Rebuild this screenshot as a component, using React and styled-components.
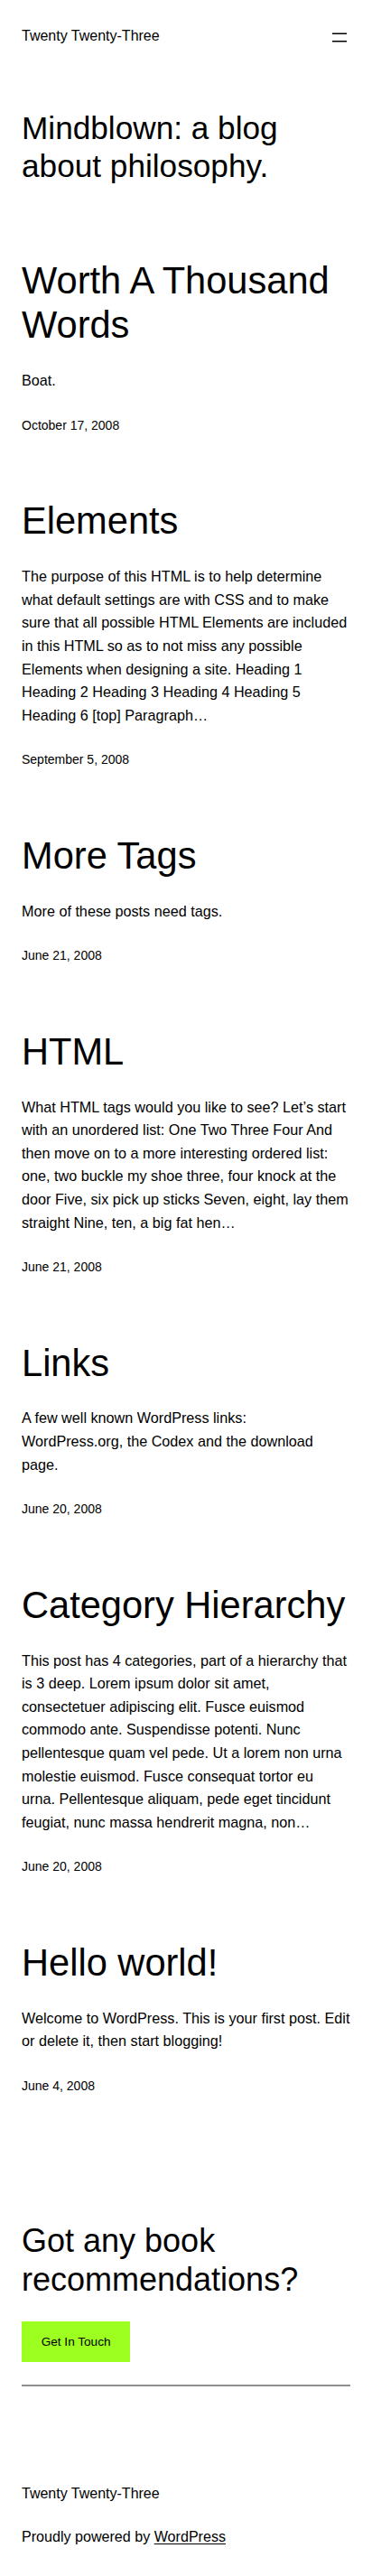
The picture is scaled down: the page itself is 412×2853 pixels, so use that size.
import React from "react";
import styled, { createGlobalStyle } from "styled-components";

const GlobalStyle = createGlobalStyle`
  *, *::before, *::after { box-sizing: border-box; }
  html, body { margin: 0; padding: 0; background: #ffffff; }
  body {
    font-family: "Liberation Sans", Arial, Helvetica, sans-serif;
    color: #000000;
  }
`;

const Page = styled.div`
  padding: 0 24px 30px;
  background: #ffffff;
`;

const Header = styled.header`
  display: flex;
  align-items: center;
  justify-content: space-between;
  padding-top: 27px;
`;

const SiteTitle = styled.a`
  font-size: 16px;
  line-height: 1.6;
  color: #000;
  text-decoration: none;
`;

const MenuButton = styled.button`
  display: flex;
  width: 24px;
  height: 24px;
  padding: 0;
  border: 0;
  background: none;
  color: #000;
  cursor: pointer;
`;

const SiteHeading = styled.h1`
  margin: 68px 0 0;
  font-size: 35.2px;
  line-height: 1.2;
  font-weight: 400;
`;

const PostList = styled.ul`
  list-style: none;
  margin: 80.5px 0 0;
  padding: 0;
  display: flex;
  flex-direction: column;
  gap: 70px;
`;

const PostItem = styled.li`
  display: flex;
  flex-direction: column;
`;

const PostTitle = styled.h2`
  margin: 0;
  font-size: 41.6px;
  line-height: 1.2;
  font-weight: 400;
`;

const Excerpt = styled.p`
  margin: 24px 0 25px;
  font-size: 16.2px;
  line-height: 25.6px;
`;

const PostDate = styled.time`
  font-size: 14px;
  line-height: 1.6;
`;

const Cta = styled.section`
  margin-top: 138.5px;
  display: flex;
  flex-direction: column;
  align-items: flex-start;
`;

const CtaHeading = styled.h2`
  margin: 0;
  font-size: 36px;
  line-height: 1.2;
  font-weight: 400;
`;

const Button = styled.a`
  display: inline-block;
  margin-top: 24.5px;
  padding: 12px 21.7px;
  background: #9dff20;
  color: #000;
  font-size: 13.6px;
  line-height: 21px;
  text-decoration: none;
`;

const Separator = styled.hr`
  align-self: stretch;
  margin: 25px 0 0;
  height: 2px;
  border: 0;
  background: #8e8e8e;
`;

const Footer = styled.footer`
  margin-top: 106px;
  display: flex;
  flex-direction: column;
  gap: 23px;
`;

const FooterTitle = styled.div`
  font-size: 16px;
  line-height: 1.6;
`;

const Credits = styled.p`
  margin: 0;
  font-size: 16.1px;
  line-height: 25.6px;
`;

const CreditLink = styled.a`
  color: #000;
  text-decoration: underline;
  text-underline-offset: 2px;
`;

const posts = [
  {
    title: "Worth A Thousand Words",
    excerpt: "Boat.",
    date: "October 17, 2008",
  },
  {
    title: "Elements",
    excerpt:
      "The purpose of this HTML is to help determine what default settings are with CSS and to make sure that all possible HTML Elements are included in this HTML so as to not miss any possible Elements when designing a site. Heading 1 Heading 2 Heading 3 Heading 4 Heading 5 Heading 6 [top] Paragraph…",
    date: "September 5, 2008",
  },
  {
    title: "More Tags",
    excerpt: "More of these posts need tags.",
    date: "June 21, 2008",
  },
  {
    title: "HTML",
    excerpt:
      "What HTML tags would you like to see? Let’s start with an unordered list: One Two Three Four And then move on to a more interesting ordered list: one, two buckle my shoe three, four knock at the door Five, six pick up sticks Seven, eight, lay them straight Nine, ten, a big fat hen…",
    date: "June 21, 2008",
  },
  {
    title: "Links",
    excerpt:
      "A few well known WordPress links: WordPress.org, the Codex and the download page.",
    date: "June 20, 2008",
  },
  {
    title: "Category Hierarchy",
    excerpt:
      "This post has 4 categories, part of a hierarchy that is 3 deep. Lorem ipsum dolor sit amet, consectetuer adipiscing elit. Fusce euismod commodo ante. Suspendisse potenti. Nunc pellentesque quam vel pede. Ut a lorem non urna molestie euismod. Fusce consequat tortor eu urna. Pellentesque aliquam, pede eget tincidunt feugiat, nunc massa hendrerit magna, non…",
    date: "June 20, 2008",
  },
  {
    title: "Hello world!",
    excerpt:
      "Welcome to WordPress. This is your first post. Edit or delete it, then start blogging!",
    date: "June 4, 2008",
  },
];

function MenuIcon() {
  return (
    <svg width="24" height="24" viewBox="0 0 24 24" aria-hidden="true">
      <rect x="4" y="8.5" width="16" height="1.5" fill="currentColor" />
      <rect x="4" y="17" width="16" height="1.5" fill="currentColor" />
    </svg>
  );
}

export default function App() {
  return (
    <>
      <GlobalStyle />
      <Page>
        <Header>
          <SiteTitle href="#">Twenty Twenty-Three</SiteTitle>
          <MenuButton aria-label="Open menu">
            <MenuIcon />
          </MenuButton>
        </Header>

        <main>
          <SiteHeading>Mindblown: a blog about philosophy.</SiteHeading>
          <PostList>
            {posts.map((p) => (
              <PostItem key={p.title}>
                <PostTitle>{p.title}</PostTitle>
                <Excerpt>{p.excerpt}</Excerpt>
                <PostDate>{p.date}</PostDate>
              </PostItem>
            ))}
          </PostList>

          <Cta>
            <CtaHeading>Got any book recommendations?</CtaHeading>
            <Button href="#">Get In Touch</Button>
            <Separator />
          </Cta>
        </main>

        <Footer>
          <FooterTitle>Twenty Twenty-Three</FooterTitle>
          <Credits>
            Proudly powered by <CreditLink href="#">WordPress</CreditLink>
          </Credits>
        </Footer>
      </Page>
    </>
  );
}
